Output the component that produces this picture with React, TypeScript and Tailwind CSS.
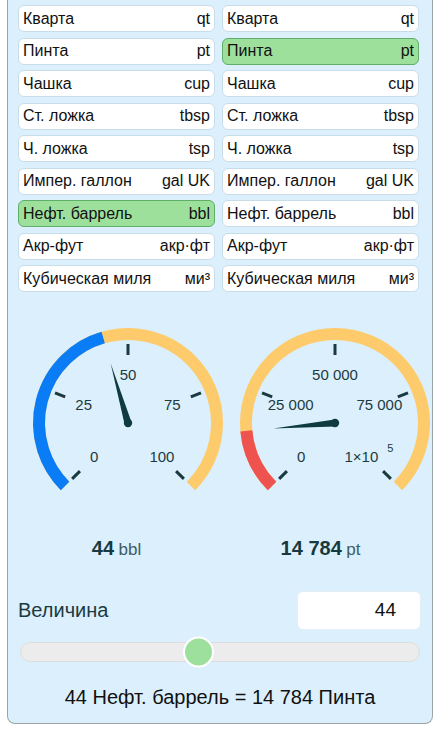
import React from 'react';

type Unit = { name: string; abbr: React.ReactNode };

const units: Unit[] = [
  { name: 'Кварта', abbr: 'qt' },
  { name: 'Пинта', abbr: 'pt' },
  { name: 'Чашка', abbr: 'cup' },
  { name: 'Ст. ложка', abbr: 'tbsp' },
  { name: 'Ч. ложка', abbr: 'tsp' },
  { name: 'Импер. галлон', abbr: 'gal UK' },
  { name: 'Нефт. баррель', abbr: 'bbl' },
  { name: 'Акр-фут', abbr: 'акр·фт' },
  { name: 'Кубическая миля', abbr: 'ми³' },
];

const CX = 110;
const CY = 122;

const pt = (deg: number, r: number) => {
  const a = (deg * Math.PI) / 180;
  return [CX + r * Math.sin(a), CY - r * Math.cos(a)];
};

const arc = (from: number, to: number, r: number) => {
  const [x1, y1] = pt(from, r);
  const [x2, y2] = pt(to, r);
  const large = to - from > 180 ? 1 : 0;
  return `M ${x1} ${y1} A ${r} ${r} 0 ${large} 1 ${x2} ${y2}`;
};

const Gauge: React.FC<{
  fraction: number;
  fill: string;
  labels: React.ReactNode[];
}> = ({ fraction, fill, labels }) => {
  const valueAngle = -135 + fraction * 270;
  const ticks = [-135, -67.5, 0, 67.5, 135];
  const [tx, ty] = pt(valueAngle, 62);
  const [bx1, by1] = pt(valueAngle - 90, 3.6);
  const [bx2, by2] = pt(valueAngle + 90, 3.6);
  return (
    <svg width={207} height={215} viewBox="0 0 207 215" className="shrink-0">
      <path d={arc(-135, 135, 89)} stroke="#fdcb6b" strokeWidth={12} fill="none" />
      <path d={arc(-135, valueAngle, 89)} stroke={fill} strokeWidth={12} fill="none" />
      {ticks.map((t) => {
        const [x1, y1] = pt(t, 68);
        const [x2, y2] = pt(t, 79);
        return <line key={t} x1={x1} y1={y1} x2={x2} y2={y2} stroke="#1b3a40" strokeWidth={3} />;
      })}
      {ticks.map((t, i) => {
        const [x, y] = pt(t, 48);
        return (
          <text
            key={t}
            x={x}
            y={y + 5}
            textAnchor="middle"
            fontSize={15}
            fill="#1d3a40"
            fontFamily="'Liberation Sans', Arial, sans-serif"
          >
            {labels[i]}
          </text>
        );
      })}
      <polygon points={`${bx1},${by1} ${tx},${ty} ${bx2},${by2}`} fill="#0f3a40" />
      <circle cx={CX} cy={CY} r={4.2} fill="#0f3a40" />
    </svg>
  );
};

const UnitButton: React.FC<{ unit: Unit; selected: boolean }> = ({ unit, selected }) => (
  <div
    className={
      selected
        ? 'h-[27px] flex items-center justify-between px-[4px] rounded-[6px] border border-[#5fae6a] bg-[#9de09c] text-[16px] text-[#111]'
        : 'h-[27px] flex items-center justify-between px-[4px] rounded-[6px] border border-[#c9dde9] bg-white text-[16px] text-[#111]'
    }
  >
    <span>{unit.name}</span>
    <span>{unit.abbr}</span>
  </div>
);

const App: React.FC = () => {
  return (
    <div className="min-h-[732px] bg-white font-['Liberation_Sans',Arial,sans-serif] text-[#111]">
      <div className="ml-[7px] w-[426px] h-[724px] bg-[#dbf0fc] border border-t-0 border-[#9aa3a8] rounded-b-[8px] px-[10px]">
        <div className="grid grid-cols-[197px_197px] gap-x-[7px] gap-y-[5.5px] pt-[5px]">
          {units.flatMap((u, i) => [
            <UnitButton key={'l' + i} unit={u} selected={i === 6} />,
            <UnitButton key={'r' + i} unit={u} selected={i === 1} />,
          ])}
        </div>

        <div className="flex mt-[9px]">
          <Gauge
            fraction={0.44}
            fill="#0a7cf6"
            labels={['0', '25', '50', '75', '100']}
          />
          <Gauge
            fraction={0.14784}
            fill="#ef5350"
            labels={[
              '0',
              '25 000',
              '50 000',
              '75 000',
              <>
                1×10
                <tspan dx={9} dy={-10} fontSize={11}>
                  5
                </tspan>
              </>,
            ]}
          />
        </div>

        <div className="grid grid-cols-[197px_197px] gap-x-[7px] mt-[19px] leading-[27px] text-[#17393f]">
          <div className="text-center">
            <span className="text-[20px] font-bold">44</span>{' '}
            <span className="text-[17px] text-[#3f5c63]">bbl</span>
          </div>
          <div className="text-center">
            <span className="text-[20px] font-bold">14 784</span>{' '}
            <span className="text-[17px] text-[#3f5c63]">pt</span>
          </div>
        </div>

        <div className="flex items-center justify-between mt-[28px]">
          <span className="text-[20px] leading-[27px] text-[#1b3a40]">Величина</span>
          <div className="w-[124px] h-[39px] bg-white rounded-[6px] border border-[#e3eef5] flex items-center justify-end pr-[24px] text-[19px] text-[#111] mr-[1px]">
            44
          </div>
        </div>

        <div className="relative mt-[12px] mx-[2px] h-[20px] rounded-full bg-[#ececec] border border-[#dcdcdc]">
          <div className="absolute top-1/2 left-[162px] -translate-y-1/2 w-[31px] h-[31px] rounded-full bg-[#9ddf9c] border-2 border-white" />
        </div>

        <div className="text-center text-[20px] leading-[27px] text-[#111] mt-[22px]">
          44 Нефт. баррель = 14 784 Пинта
        </div>
      </div>
    </div>
  );
};

export default App;
